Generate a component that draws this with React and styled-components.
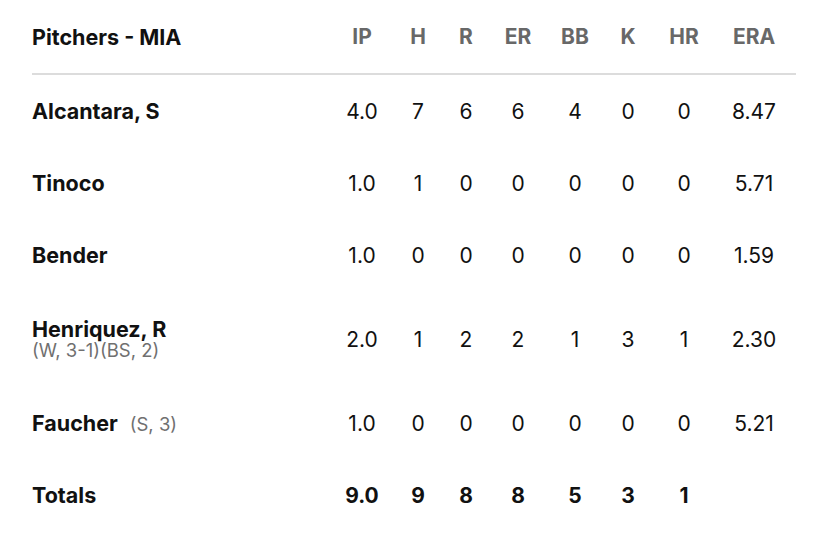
import React from "react";
import styled, { createGlobalStyle } from "styled-components";

const GlobalStyle = createGlobalStyle`
  body {
    margin: 0;
    background: #fff;
    font-family: "Inter", "Open Sans", "Liberation Sans", sans-serif;
  }
`;

const cols = [
  { key: "ip", label: "IP", width: 56 },
  { key: "h", label: "H", width: 56 },
  { key: "r", label: "R", width: 40 },
  { key: "er", label: "ER", width: 64 },
  { key: "bb", label: "BB", width: 50 },
  { key: "k", label: "K", width: 56 },
  { key: "hr", label: "HR", width: 56 },
  { key: "era", label: "ERA", width: 84 },
];

const pitchers = [
  { name: "Alcantara, S", ip: "4.0", h: 7, r: 6, er: 6, bb: 4, k: 0, hr: 0, era: "8.47" },
  { name: "Tinoco", ip: "1.0", h: 1, r: 0, er: 0, bb: 0, k: 0, hr: 0, era: "5.71" },
  { name: "Bender", ip: "1.0", h: 0, r: 0, er: 0, bb: 0, k: 0, hr: 0, era: "1.59" },
  { name: "Henriquez, R", note: "(W, 3-1)(BS, 2)", stacked: true, ip: "2.0", h: 1, r: 2, er: 2, bb: 1, k: 3, hr: 1, era: "2.30" },
  { name: "Faucher", note: "(S, 3)", ip: "1.0", h: 0, r: 0, er: 0, bb: 0, k: 0, hr: 0, era: "5.21" },
];

const totals = { ip: "9.0", h: 9, r: 8, er: 8, bb: 5, k: 3, hr: 1, era: "" };

export default function App() {
  return (
    <>
      <GlobalStyle />
      <Table>
        <HeaderRow>
          <NameCell>
            <Title>Pitchers - MIA</Title>
          </NameCell>
          {cols.map((c) => (
            <StatCell key={c.key} $w={c.width}>
              <HeadLabel>{c.label}</HeadLabel>
            </StatCell>
          ))}
        </HeaderRow>
        {pitchers.map((p) => (
          <Row key={p.name} $tall={p.stacked}>
            <NameCell $stacked={p.stacked}>
              <Name>{p.name}</Name>
              {p.note && <Note $stacked={p.stacked}>{p.note}</Note>}
            </NameCell>
            {cols.map((c) => (
              <StatCell key={c.key} $w={c.width}>
                <Num>{p[c.key]}</Num>
              </StatCell>
            ))}
          </Row>
        ))}
        <Row>
          <NameCell>
            <Name>Totals</Name>
          </NameCell>
          {cols.map((c) => (
            <StatCell key={c.key} $w={c.width}>
              <Num $bold>{totals[c.key]}</Num>
            </StatCell>
          ))}
        </Row>
      </Table>
    </>
  );
}

const Table = styled.div`
  width: 764px;
  margin-left: 32px;
  display: flex;
  flex-direction: column;
`;

const HeaderRow = styled.div`
  height: 73px;
  display: flex;
  align-items: center;
  border-bottom: 2px solid #dcdcdc;
`;

const Row = styled.div`
  height: ${(p) => (p.$tall ? 96 : 72)}px;
  display: flex;
  align-items: center;
`;

const NameCell = styled.div`
  flex: 1;
  display: flex;
  flex-direction: ${(p) => (p.$stacked ? "column" : "row")};
  align-items: ${(p) => (p.$stacked ? "flex-start" : "baseline")};
`;

const StatCell = styled.div`
  width: ${(p) => p.$w}px;
  flex-shrink: 0;
  text-align: center;
`;

const Title = styled.span`
  font-size: 21.5px;
  font-weight: 700;
  color: #111;
`;

const HeadLabel = styled.span`
  font-size: 21px;
  font-weight: 700;
  color: #686868;
`;

const Name = styled.span`
  font-size: 21.5px;
  font-weight: 700;
  color: #111;
  line-height: 22px;
`;

const Note = styled.span`
  font-size: 18.5px;
  color: #707070;
  line-height: 20px;
  margin-left: ${(p) => (p.$stacked ? 0 : 12)}px;
`;

const Num = styled.span`
  font-size: 21px;
  font-weight: ${(p) => (p.$bold ? 700 : 400)};
  color: #111;
`;
